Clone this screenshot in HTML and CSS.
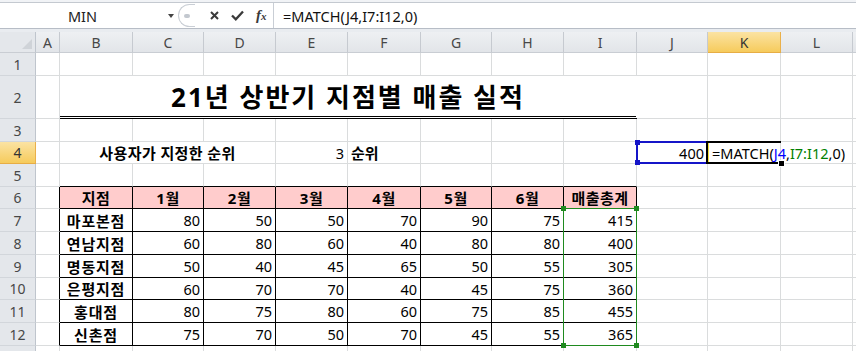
FILE: index.html
```html
<!DOCTYPE html>
<html lang="ko">
<head>
    <meta charset="UTF-8">
    <meta name="viewport" content="width=device-width, initial-scale=1.0">
    <title>21년 상반기 지점별 매출 실적</title>
    <link rel="stylesheet" href="styles.css">
</head>
<body>
    <div class="ribbon-edge"></div>
    <div class="fbar">
        <div class="namebox"><span class="name">MIN</span><span class="dd"></span></div>
        <div class="grip"><span></span></div>
        <div class="fbtns">
            <svg class="ico-x" width="9" height="9" viewBox="0 0 9 9"><path d="M1 1L8 8M8 1L1 8" stroke="#3a3a3a" stroke-width="2" fill="none"/></svg>
            <svg class="ico-ok" width="13" height="11" viewBox="0 0 13 11"><path d="M1 5.5L4.8 9.3L12 1.5" stroke="#3a3a3a" stroke-width="2.3" fill="none"/></svg>
            <span class="fx">f<span>x</span></span>
        </div>
        <div class="finput">=MATCH(J4,I7:I12,0)</div>
    </div>
    <div class="gap"></div>

    <div class="sheet">
        <!-- column headers -->
        <div class="corner"><svg width="10" height="10" viewBox="0 0 10 10"><path d="M10 0V10H0Z" fill="#cfd3d8"/></svg></div>
        <div class="ch">A</div><div class="ch">B</div><div class="ch">C</div><div class="ch">D</div>
        <div class="ch">E</div><div class="ch">F</div><div class="ch">G</div><div class="ch">H</div>
        <div class="ch">I</div><div class="ch">J</div><div class="ch sel">K</div><div class="ch">L</div><div class="ch"></div>

        <!-- row 1 -->
        <div class="rh">1</div>
        <div class="c"></div><div class="c"></div><div class="c"></div><div class="c"></div><div class="c"></div><div class="c"></div>
        <div class="c"></div><div class="c"></div><div class="c"></div><div class="c"></div><div class="c"></div><div class="c"></div><div class="c"></div>

        <!-- row 2 -->
        <div class="rh">2</div>
        <div class="c"></div>
        <div class="c title">21년 상반기 지점별 매출 실적</div>
        <div class="c"></div><div class="c"></div><div class="c"></div><div class="c"></div>

        <!-- row 3 -->
        <div class="rh">3</div>
        <div class="c"></div><div class="c"></div><div class="c"></div><div class="c"></div><div class="c"></div><div class="c"></div>
        <div class="c"></div><div class="c"></div><div class="c"></div><div class="c"></div><div class="c"></div><div class="c"></div><div class="c"></div>

        <!-- row 4 -->
        <div class="rh sel">4</div>
        <div class="c"></div>
        <div class="c label">사용자가 지정한 순위</div>
        <div class="c n">3</div>
        <div class="c b">순위</div>
        <div class="c"></div><div class="c"></div><div class="c"></div>
        <div class="c n">400</div>
        <div class="c edit">=MATCH(<span class="ref-j">J4</span>,<span class="ref-i">I7:I12</span>,0)<span class="caret"></span></div>
        <div class="c"></div><div class="c"></div>

        <!-- row 5 -->
        <div class="rh">5</div>
        <div class="c"></div>
        <div class="c et"></div><div class="c et"></div><div class="c et"></div><div class="c et"></div>
        <div class="c et"></div><div class="c et"></div><div class="c et"></div><div class="c et"></div>
        <div class="c"></div><div class="c"></div><div class="c"></div><div class="c"></div>

        <!-- row 6: table header -->
        <div class="rh">6</div>
        <div class="c el"></div>
        <div class="c t th">지점</div><div class="c t th">1월</div><div class="c t th">2월</div><div class="c t th">3월</div>
        <div class="c t th">4월</div><div class="c t th">5월</div><div class="c t th">6월</div><div class="c t th">매출총계</div>
        <div class="c"></div><div class="c"></div><div class="c"></div><div class="c"></div>

        <!-- row 7 -->
        <div class="rh">7</div>
        <div class="c el"></div>
        <div class="c t nm">마포본점</div>
        <div class="c t n">80</div><div class="c t n">50</div><div class="c t n">50</div><div class="c t n">70</div>
        <div class="c t n">90</div><div class="c t n">75</div><div class="c t n">415</div>
        <div class="c"></div><div class="c"></div><div class="c"></div><div class="c"></div>

        <!-- row 8 -->
        <div class="rh">8</div>
        <div class="c el"></div>
        <div class="c t nm">연남지점</div>
        <div class="c t n">60</div><div class="c t n">80</div><div class="c t n">60</div><div class="c t n">40</div>
        <div class="c t n">80</div><div class="c t n">80</div><div class="c t n">400</div>
        <div class="c"></div><div class="c"></div><div class="c"></div><div class="c"></div>

        <!-- row 9 -->
        <div class="rh">9</div>
        <div class="c el"></div>
        <div class="c t nm">명동지점</div>
        <div class="c t n">50</div><div class="c t n">40</div><div class="c t n">45</div><div class="c t n">65</div>
        <div class="c t n">50</div><div class="c t n">55</div><div class="c t n">305</div>
        <div class="c"></div><div class="c"></div><div class="c"></div><div class="c"></div>

        <!-- row 10 -->
        <div class="rh">10</div>
        <div class="c el"></div>
        <div class="c t nm">은평지점</div>
        <div class="c t n">60</div><div class="c t n">70</div><div class="c t n">70</div><div class="c t n">40</div>
        <div class="c t n">45</div><div class="c t n">75</div><div class="c t n">360</div>
        <div class="c"></div><div class="c"></div><div class="c"></div><div class="c"></div>

        <!-- row 11 -->
        <div class="rh">11</div>
        <div class="c el"></div>
        <div class="c t nm">홍대점</div>
        <div class="c t n">80</div><div class="c t n">75</div><div class="c t n">80</div><div class="c t n">60</div>
        <div class="c t n">75</div><div class="c t n">85</div><div class="c t n">455</div>
        <div class="c"></div><div class="c"></div><div class="c"></div><div class="c"></div>

        <!-- row 12 -->
        <div class="rh">12</div>
        <div class="c el"></div>
        <div class="c t nm">신촌점</div>
        <div class="c t n">75</div><div class="c t n">70</div><div class="c t n">50</div><div class="c t n">70</div>
        <div class="c t n">45</div><div class="c t n">55</div><div class="c t n">365</div>
        <div class="c"></div><div class="c"></div><div class="c"></div><div class="c"></div>

        <!-- row 13 (only its top edge is on screen) -->
        <div class="rh"></div>
        <div class="c"></div><div class="c"></div><div class="c"></div><div class="c"></div><div class="c"></div><div class="c"></div>
        <div class="c"></div><div class="c"></div><div class="c"></div><div class="c"></div><div class="c"></div><div class="c"></div><div class="c"></div>

        <!-- range finder + active cell overlays -->
        <div class="range range-i"><i class="tl"></i><i class="tr"></i><i class="bl"></i><i class="br"></i></div>
        <div class="range range-j"><i class="tl"></i><i class="bl"></i></div>
        <div class="active"><i class="handle"></i></div>
    </div>
</body>
</html>
```

FILE: styles.css
```css
* {
    box-sizing: border-box;
}
body {
    margin: 0;
    font-family: "Noto Sans", "Noto Sans CJK KR", sans-serif;
    font-size: 14.5px;
    color: #000;
    background: #fff;
    overflow: hidden;
}

/* formula bar */
.ribbon-edge {
    height: 3px;
    background: #f1f3f6;
    border-bottom: 1px solid #c4c9d0;
}
.fbar {
    display: flex;
    height: 26px;
    background: #fff;
    border-bottom: 1px solid #b7bdc6;
}
.namebox {
    width: 178px;
    display: flex;
    align-items: center;
}
.namebox .name {
    width: 165px;
    text-align: center;
    color: #222;
}
.dd {
    width: 0;
    height: 0;
    border-left: 3px solid transparent;
    border-right: 3px solid transparent;
    border-top: 4px solid #444;
    margin-left: 3px;
}
.grip {
    width: 17px;
    margin: 1px 0;
    border: 1px solid #c9ced5;
    border-right: none;
    border-radius: 12px 0 0 12px;
    display: flex;
    align-items: center;
    justify-content: center;
}
.grip span {
    width: 6px;
    height: 4px;
    border-radius: 2px;
    background: #c3c8cf;
}
.fbtns {
    width: 78px;
    display: flex;
    align-items: center;
    padding-left: 15px;
}
.ico-ok {
    margin-left: 12px;
}
.fx {
    margin-left: 12px;
    font-family: "Liberation Serif", serif;
    font-style: italic;
    font-weight: bold;
    font-size: 15px;
    color: #3a3a3a;
}
.fx span {
    font-size: 11px;
}
.finput {
    flex: 1;
    border-left: 1px solid #c9ced5;
    padding-left: 9px;
    display: flex;
    align-items: center;
    color: #111;
}
.gap {
    height: 3px;
    background: #e9ecf0;
}

/* sheet grid */
.sheet {
    position: relative;
    display: grid;
    grid-template-columns: 36px 24px 73px 71px 72px 72px 73px 71px 72px 73px 71px 73px 72px 1fr;
    grid-template-rows: 21px 23px 43px 23px 22px 23px 22px 23px 23px 23px 22px 23px 23px 23px;
}
.corner {
    background: #e4e7eb;
    border-right: 1px solid #bfc5cd;
    border-bottom: 1px solid #c9cdd3;
    display: flex;
    align-items: flex-end;
    justify-content: flex-end;
    padding: 0 3px 3px 0;
}
.ch {
    background: linear-gradient(#eef0f3, #e2e5e9);
    border-right: 1px solid #c6cad0;
    border-bottom: 1px solid #c9cdd3;
    color: #474747;
    font-size: 14px;
    display: flex;
    align-items: center;
    justify-content: center;
}
.rh {
    background: #e4e7eb;
    border-right: 1px solid #bfc5cd;
    border-bottom: 1px solid #d2d6db;
    color: #474747;
    font-size: 14px;
    display: flex;
    align-items: center;
    justify-content: center;
}
.ch.sel,
.rh.sel {
    background: linear-gradient(#fbe3a3, #f6cb5c);
    border-right-color: #eab04a;
    border-bottom-color: #e7ad45;
    color: #333;
}
.c {
    border-right: 1px solid #dadcdd;
    border-bottom: 1px solid #dadcdd;
    display: flex;
    align-items: center;
    padding: 0 3px;
    white-space: nowrap;
    min-width: 0;
}

/* content */
.title {
    grid-column: span 8;
    justify-content: center;
    font-size: 26px;
    font-weight: bold;
    letter-spacing: 2px;
    border-right-color: transparent;
    border-bottom: 3px double #000;
}
.label {
    grid-column: span 3;
    justify-content: center;
    font-weight: bold;
    font-size: 15px;
    letter-spacing: 0.4px;
}
.b {
    font-weight: bold;
    font-size: 15px;
}
.n {
    justify-content: flex-end;
}
.t {
    border-right-color: #000;
    border-bottom-color: #000;
}
.el {
    border-right-color: #000;
}
.et {
    border-bottom-color: #000;
}
.th {
    background: #ffcccc;
    justify-content: center;
    font-weight: bold;
    font-size: 15px;
    letter-spacing: 0.5px;
}
.nm {
    justify-content: center;
    font-weight: bold;
    font-size: 15px;
    letter-spacing: 0.8px;
}
.edit {
    padding-left: 4px;
    overflow: visible;
}
.ref-j {
    color: #0000ff;
}
.ref-i {
    color: #008000;
}
.caret {
    display: inline-block;
    width: 1px;
    height: 16px;
    background: #000;
    margin-left: 1px;
}

/* range finder boxes drawn over the grid */
.range {
    position: absolute;
    inset: -1px 0 0 -1px;
    border: 1px solid;
}
.range i {
    position: absolute;
    width: 5px;
    height: 5px;
    background: currentColor;
}
.range .tl { left: -3px; top: -3px; }
.range .tr { right: -3px; top: -3px; }
.range .bl { left: -3px; bottom: -3px; }
.range .br { right: -3px; bottom: -3px; }
.range-i {
    grid-column: 10 / 11;
    grid-row: 8 / 14;
    color: #1f8a1f;
    border-color: #1f8a1f;
}
.range-j {
    grid-column: 11 / 12;
    grid-row: 5 / 6;
    color: #1515c8;
    border-color: #1515c8;
    border-width: 2px 0 2px 2px;
}
.active {
    position: absolute;
    grid-column: 12 / 13;
    grid-row: 5 / 6;
    inset: -1px 0 0 -2px;
    border: 2px solid #000;
    border-right: none;
    box-shadow: inset 1px 0 #f4e03a;
}
.handle {
    position: absolute;
    right: -4px;
    bottom: -5px;
    width: 7px;
    height: 7px;
    background: #000;
    border: 1px solid #fff;
}
```
